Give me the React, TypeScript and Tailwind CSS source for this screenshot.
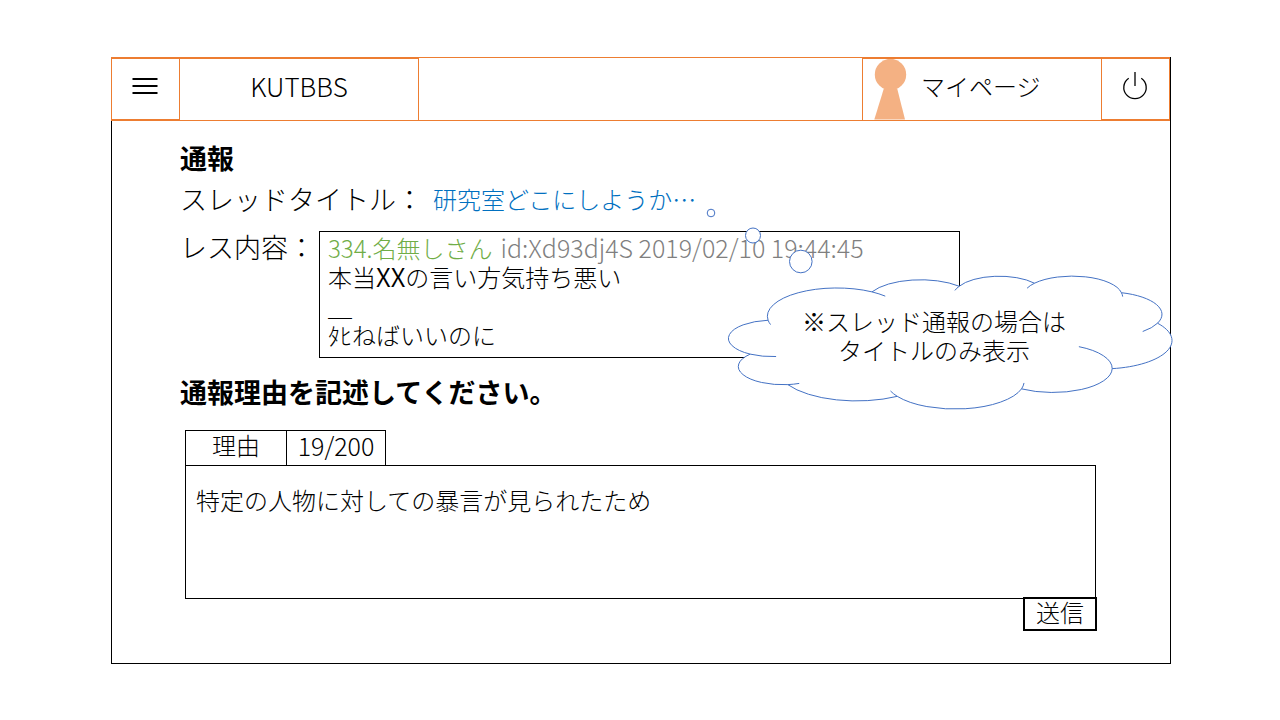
import { useState } from "react";

const CLOUD_OUTLINE = [
  "M1950 7185",
  "A2172 2972 0 0 0 1080 12690",
  "A2180 2959 0 0 0 2910 17640",
  "A3860 5271 0 0 0 8235 19545",
  "A3376 4607 0 0 0 14280 18330",
  "A2892 3933 0 0 0 18690 15045",
  "A3388 4610 0 0 0 20895 7665",
  "A2667 3636 0 0 0 19140 2715",
  "A2428 3297 0 0 0 14910 1170",
  "A2182 2972 0 0 0 11250 1665",
  "A2666 3633 0 0 0 7005 2580",
  "A3376 4595 0 0 0 1950 7185Z",
].join("");

const CLOUD_CREASES = [
  "M1080 12690A2172 2972 0 0 0 2340 13080",
  "M2910 17640A2180 2959 0 0 0 3465 17445",
  "M7905 18675A3376 4607 0 0 0 8235 19545",
  "M14280 18330A3376 4607 0 0 0 14400 17370",
  "M18690 15045A2892 3933 0 0 0 17070 11475",
  "M20175 9015A2667 3636 0 0 0 20895 7665",
  "M19200 3345A2428 3297 0 0 0 19140 2715",
  "M14910 1170A2428 3297 0 0 0 14550 1980",
  "M11250 1665A2182 2972 0 0 0 11040 2340",
  "M7650 3270A3376 4595 0 0 0 7005 2580",
  "M1950 7185A3376 4595 0 0 0 2070 7890",
].join("");

function Header() {
  return (
    <header className="mr-px flex h-16 border-y border-l border-[#ed7d31] shadow-[1px_0_0_0_#000]">
      <button type="button" aria-label="メニュー" className="flex w-[67px] items-center justify-center border-y border-[#ed7d31]">
        <svg viewBox="0 0 26 18" className="mr-0.5 mb-1.5 h-[18px] w-[26px]" stroke="#000" strokeWidth="2">
          <path d="M0.5 2H25.5M0.5 9H25.5M0.5 16H25.5" />
        </svg>
      </button>
      <h1 className="flex w-60 items-center justify-center border-x border-t border-[#ed7d31] pb-1.5 text-[26px]">KUTBBS</h1>
      <a href="#mypage" className="ml-auto flex w-60 items-center border-x border-t border-[#ed7d31]">
        <svg viewBox="0 0 34 62" className="ml-[11px] h-[62px] w-[34px] shrink-0" fill="#f4b183">
          <circle cx="16.5" cy="15.5" r="15.7" />
          <path d="M9.7 30H23.300L31 60.500H0.300Z" />
        </svg>
        <span className="pb-2 pl-[13px]">マイページ</span>
      </a>
      <button type="button" aria-label="ログアウト" className="flex w-17 items-center justify-center border-y border-r border-[#ed7d31]">
        <svg viewBox="0 0 26 30" className="mr-0.5 mb-1.5 h-[30px] w-[26px]" fill="none" stroke="#000" strokeWidth="1.300">
          <path d="M13 1V15M6.700 7.200A11.200 11.200 0 1 0 19.300 7.200" />
        </svg>
      </button>
    </header>
  );
}

function ThoughtCloud() {
  return (
    <aside className="absolute top-[155px] left-[616px] h-[133px] w-[444px]">
      <svg
        viewBox="0 0 21600 21600"
        preserveAspectRatio="none"
        className="absolute inset-0 h-full w-full overflow-visible"
        stroke="#4472c4"
      >
        <path d={CLOUD_OUTLINE} fill="#fff" vectorEffect="non-scaling-stroke" />
        <path d={CLOUD_CREASES} fill="none" vectorEffect="non-scaling-stroke" />
      </svg>
      <svg
        viewBox="0 0 110 70"
        className="absolute -top-[69px] -left-[24px] h-[70px] w-[110px]"
        fill="#fff"
        stroke="#4472c4"
      >
        <circle cx="7" cy="6" r="3.800" />
        <circle cx="49" cy="28.500" r="7.500" />
        <circle cx="96.800" cy="54.500" r="11.300" />
      </svg>
      <p className="relative pt-[30px] pr-8 text-center leading-[29px] whitespace-nowrap">
        ※スレッド通報の場合は
        <br />
        タイトルのみ表示
      </p>
    </aside>
  );
}

export default function App() {
  const [reason, setReason] = useState("特定の人物に対しての暴言が見られたため");

  return (
    <div className="min-h-screen bg-white pt-[57px] pr-[109px] pb-14 pl-[111px] font-['Noto_Sans_CJK_JP',sans-serif] text-2xl font-light text-black">
      <Header />
      <main className="relative border-x border-b border-black pt-[17px] pr-[74px] pb-8 pl-[68px]">
        <h2 className="text-[27px] leading-10 font-bold">通報</h2>
        <div className="mt-px flex items-center leading-10">
          <span className="text-[27px]">スレッドタイトル：</span>
          <a href="#thread" className="ml-[10px] text-[#0070c0]">
            研究室どこにしようか…
          </a>
        </div>
        <div className="mt-3 flex">
          <span className="w-[139px] shrink-0 text-[27px] leading-8 whitespace-nowrap">レス内容：</span>
          <article className="max-w-[641px] flex-1 border border-black px-2 pt-px pb-2 leading-[29px]">
            <p className="whitespace-nowrap text-[#7f7f7f]">
              <span className="text-[#70ad47]">334.名無しさん</span>
              <span className="ml-2 text-[25px] leading-none">id:Xd93dj4S 2019/02/10 19:44:45</span>
            </p>
            <p>
              本当<span className="text-[26px] leading-none font-[350]">XX</span>の言い方気持ち悪い
            </p>
            <p>＿</p>
            <p>ﾀﾋねばいいのに</p>
          </article>
        </div>
        <h3 className="mt-[14px] text-[27px] leading-10 font-bold">
          <label htmlFor="reason">通報理由を記述してください。</label>
        </h3>
        <form className="mt-[18px] ml-[5px] flex flex-col" onSubmit={(e) => e.preventDefault()}>
          <div className="flex h-[35px] self-start border-x border-t border-black text-center leading-7">
            <span className="w-[101px] border-r border-black">理由</span>
            <span className="w-[98px] text-[25px]">{reason.length}/200</span>
          </div>
          <textarea
            id="reason"
            maxLength={200}
            value={reason}
            onChange={(e) => setReason(e.target.value)}
            className="block h-[134px] w-full resize-none border border-black px-[10px] py-[19px] leading-[29px] outline-none"
          />
          <button type="submit" className="relative -mt-0.5 -mr-px h-[34px] w-[74px] self-end border-2 border-black bg-white pb-1 leading-[26px]">
            送信
          </button>
        </form>
        <ThoughtCloud />
      </main>
    </div>
  );
}
